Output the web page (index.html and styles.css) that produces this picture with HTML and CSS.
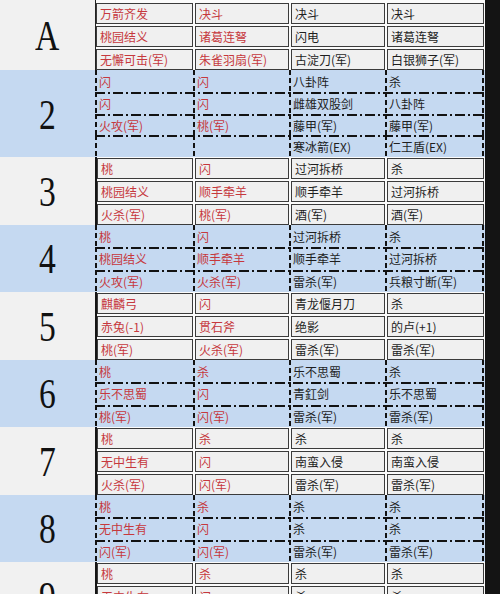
FILE: index.html
```html
<!DOCTYPE html>
<html lang="zh">
<head>
<meta charset="utf-8">
<title>卡牌分配表</title>
<link rel="stylesheet" href="styles.css">
</head>
<body>
<div class="page">
  <div class="sheet">
    <section class="block gray first">
      <div class="label"><span>A</span></div>
      <div class="cells">
        <div class="row"><div class="cell r">万箭齐发</div><div class="cell r">决斗</div><div class="cell">决斗</div><div class="cell">决斗</div></div>
        <div class="row"><div class="cell r">桃园结义</div><div class="cell r">诸葛连弩</div><div class="cell">闪电</div><div class="cell">诸葛连弩</div></div>
        <div class="row"><div class="cell r">无懈可击(军)</div><div class="cell r">朱雀羽扇(军)</div><div class="cell">古淀刀(军)</div><div class="cell">白银狮子(军)</div></div>
      </div>
    </section>

    <section class="block blue four">
      <div class="label"><span>2</span></div>
      <div class="cells">
        <div class="row"><div class="cell r">闪</div><div class="cell r">闪</div><div class="cell">八卦阵</div><div class="cell">杀</div></div>
        <div class="row"><div class="cell r">闪</div><div class="cell r">闪</div><div class="cell">雌雄双股剑</div><div class="cell">八卦阵</div></div>
        <div class="row"><div class="cell r">火攻(军)</div><div class="cell r">桃(军)</div><div class="cell">藤甲(军)</div><div class="cell">藤甲(军)</div></div>
        <div class="row"><div class="cell r"></div><div class="cell r"></div><div class="cell">寒冰箭(EX)</div><div class="cell">仁王盾(EX)</div></div>
      </div>
    </section>

    <section class="block gray thick">
      <div class="label"><span>3</span></div>
      <div class="cells">
        <div class="row"><div class="cell r">桃</div><div class="cell r">闪</div><div class="cell">过河拆桥</div><div class="cell">杀</div></div>
        <div class="row"><div class="cell r">桃园结义</div><div class="cell r">顺手牵羊</div><div class="cell">顺手牵羊</div><div class="cell">过河拆桥</div></div>
        <div class="row"><div class="cell r">火杀(军)</div><div class="cell r">桃(军)</div><div class="cell">酒(军)</div><div class="cell">酒(军)</div></div>
      </div>
    </section>

    <section class="block blue">
      <div class="label"><span>4</span></div>
      <div class="cells">
        <div class="row"><div class="cell r">桃</div><div class="cell r">闪</div><div class="cell">过河拆桥</div><div class="cell">杀</div></div>
        <div class="row"><div class="cell r">桃园结义</div><div class="cell r">顺手牵羊</div><div class="cell">顺手牵羊</div><div class="cell">过河拆桥</div></div>
        <div class="row"><div class="cell r">火攻(军)</div><div class="cell r">火杀(军)</div><div class="cell">雷杀(军)</div><div class="cell">兵粮寸断(军)</div></div>
      </div>
    </section>

    <section class="block gray thick">
      <div class="label"><span>5</span></div>
      <div class="cells">
        <div class="row"><div class="cell r">麒麟弓</div><div class="cell r">闪</div><div class="cell">青龙偃月刀</div><div class="cell">杀</div></div>
        <div class="row"><div class="cell r">赤兔(-1)</div><div class="cell r">贯石斧</div><div class="cell">绝影</div><div class="cell">的卢(+1)</div></div>
        <div class="row"><div class="cell r">桃(军)</div><div class="cell r">火杀(军)</div><div class="cell">雷杀(军)</div><div class="cell">雷杀(军)</div></div>
      </div>
    </section>

    <section class="block blue">
      <div class="label"><span>6</span></div>
      <div class="cells">
        <div class="row"><div class="cell r">桃</div><div class="cell r">杀</div><div class="cell">乐不思蜀</div><div class="cell">杀</div></div>
        <div class="row"><div class="cell r">乐不思蜀</div><div class="cell r">闪</div><div class="cell">青釭剑</div><div class="cell">乐不思蜀</div></div>
        <div class="row"><div class="cell r">桃(军)</div><div class="cell r">闪(军)</div><div class="cell">雷杀(军)</div><div class="cell">雷杀(军)</div></div>
      </div>
    </section>

    <section class="block gray thick">
      <div class="label"><span>7</span></div>
      <div class="cells">
        <div class="row"><div class="cell r">桃</div><div class="cell r">杀</div><div class="cell">杀</div><div class="cell">杀</div></div>
        <div class="row"><div class="cell r">无中生有</div><div class="cell r">闪</div><div class="cell">南蛮入侵</div><div class="cell">南蛮入侵</div></div>
        <div class="row"><div class="cell r">火杀(军)</div><div class="cell r">闪(军)</div><div class="cell">雷杀(军)</div><div class="cell">雷杀(军)</div></div>
      </div>
    </section>

    <section class="block blue">
      <div class="label"><span>8</span></div>
      <div class="cells">
        <div class="row"><div class="cell r">桃</div><div class="cell r">杀</div><div class="cell">杀</div><div class="cell">杀</div></div>
        <div class="row"><div class="cell r">无中生有</div><div class="cell r">闪</div><div class="cell">杀</div><div class="cell">杀</div></div>
        <div class="row"><div class="cell r">闪(军)</div><div class="cell r">闪(军)</div><div class="cell">雷杀(军)</div><div class="cell">雷杀(军)</div></div>
      </div>
    </section>

    <section class="block gray thick last">
      <div class="label"><span>9</span></div>
      <div class="cells">
        <div class="row"><div class="cell r">桃</div><div class="cell r">杀</div><div class="cell">杀</div><div class="cell">杀</div></div>
        <div class="row"><div class="cell r">无中生有</div><div class="cell r">闪</div><div class="cell">杀</div><div class="cell">杀</div></div>
      </div>
    </section>
  </div>
  <div class="strip"></div>
</div>
</body>
</html>
```

FILE: styles.css
```css
html, body {
  margin: 0;
  padding: 0;
  background: #151515;
}

.page {
  display: flex;
  width: 500px;
  height: 594px;
  overflow: hidden;
}

.sheet {
  width: 485px;
  flex: none;
  display: flex;
  flex-direction: column;
}

.strip {
  flex: 1;
  background: #141414;
}

.block {
  display: flex;
  flex: none;
}

.block.last {
  height: 68px;
}

.label {
  width: 95px;
  flex: none;
  display: flex;
  align-items: center;
  justify-content: center;
  font-family: "Liberation Serif", "DejaVu Serif", serif;
  font-size: 42px;
  color: #111;
  line-height: 1;
}

.label span {
  display: inline-block;
  transform: scaleX(0.8);
  padding-top: 2px;
}

.cells {
  display: flex;
  flex-direction: column;
  width: 390px;
}

.cell {
  font-family: "Noto Sans CJK SC", "Noto Sans", sans-serif;
  font-size: 12px;
  color: #1e1e1e;
  white-space: nowrap;
  overflow: hidden;
  padding-left: 3px;
}

.cell.r {
  color: #c6383d;
}

/* gray blocks: double-line boxed cells */
.gray {
  background: #f1f1f1;
}

.gray .cells {
  background: #fbfbfb;
  border-left: 1px solid #222;
  gap: 2px;
  padding-top: 1px;
  width: 389px;
}

.gray.first .cells {
  padding-top: 3px;
}

.gray.thick .cells {
  border-left: 2px solid #151515;
  width: 388px;
}

.gray .row {
  display: grid;
  grid-template-columns: 97px 94px 94px 97px;
  column-gap: 2px;
  height: 21px;
  flex: none;
}

.gray.thick .row {
  grid-template-columns: 96px 94px 94px 97px;
}

.gray .cell {
  background: #f0f0f0;
  border: 1px solid #3b3b3b;
  line-height: 19px;
}

/* blue blocks: dash-dot lines */
.blue {
  background: #c5d9f1;
}

.blue .cells {
  width: 389px;
}

.blue .row {
  display: grid;
  grid-template-columns: 98px 96px 96px 99px;
  height: 22.33px;
}

.blue.four .row {
  height: 21.75px;
}

.blue .row + .row {
  background-image: repeating-linear-gradient(to right, #121212 0 10px, transparent 10px 13px, #121212 13px 15px, transparent 15px 18px);
  background-size: 100% 2px;
  background-repeat: no-repeat;
  background-position: left top;
}

.blue .cell {
  background-image: repeating-linear-gradient(to bottom, #121212 0 5px, transparent 5px 8px);
  background-size: 2px 100%;
  background-repeat: no-repeat;
  background-position: left top;
  line-height: 23px;
  padding-left: 4px;
}

.blue .cell:last-child {
  background-image:
    repeating-linear-gradient(to bottom, #121212 0 5px, transparent 5px 8px),
    repeating-linear-gradient(to bottom, #121212 0 5px, transparent 5px 8px);
  background-size: 2px 100%, 2px 100%;
  background-repeat: no-repeat, no-repeat;
  background-position: left top, right top;
}
```
